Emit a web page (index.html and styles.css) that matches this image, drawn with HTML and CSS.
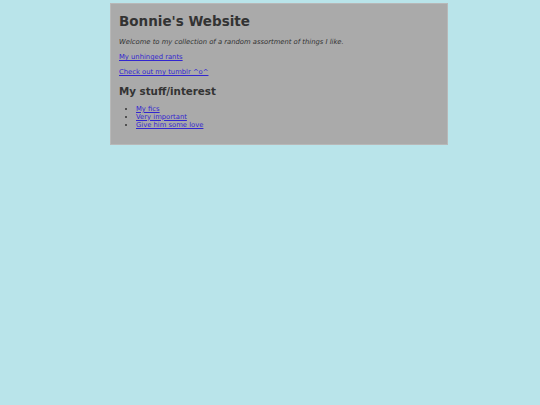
FILE: index.html
```
<!DOCTYPE html>
<html>
<head>
<meta charset="utf-8">
<link rel="stylesheet" href="styles.css">
</head>
<body>
<div class="page">
  <h1 class="title">Bonnie's Website</h1>
  <p class="intro">Welcome to my collection of a random assortment of things I like.</p>
  <p class="link-line"><a href="#">My unhinged rants</a></p>
  <p class="link-line"><a href="#">Check out my tumblr ^o^</a></p>
  <h2 class="section">My stuff/interest</h2>
  <ul class="list">
    <li><a href="#">My fics</a></li>
    <li><a href="#">Very important</a></li>
    <li><a href="#">Give him some love</a></li>
  </ul>
</div>
</body>
</html>
```
FILE: styles.css
```
html, body {
  margin: 0;
  padding: 0;
}
body {
  background: #b9e4ea;
  font-family: "DejaVu Sans", Verdana, sans-serif;
  font-size: 6.8px;
  color: #333;
  padding-top: 3px;
}
.page {
  margin-left: 110px;
  width: 320px;
  background: #aaaaaa;
  border: 1px solid #b8b8b8;
  padding: 9.3px 8px 15.4px 8px;
}
a {
  color: #3226d0;
}
.title {
  font-size: 13.5px;
  line-height: 16px;
  font-weight: bold;
  margin: 0 0 9px 0;
  color: #333;
}
.intro {
  font-style: italic;
  line-height: 9px;
  margin: 0 0 6px 0;
}
.link-line {
  line-height: 9px;
  margin: 0 0 6px 0;
}
.link-line:last-of-type {
  margin-bottom: 0;
}
.section {
  font-size: 10.3px;
  line-height: 12px;
  margin: 7.3px 0 8.2px 0;
}
.list {
  margin: 0;
  padding-left: 17px;
}
.list li {
  line-height: 8px;
}
```
